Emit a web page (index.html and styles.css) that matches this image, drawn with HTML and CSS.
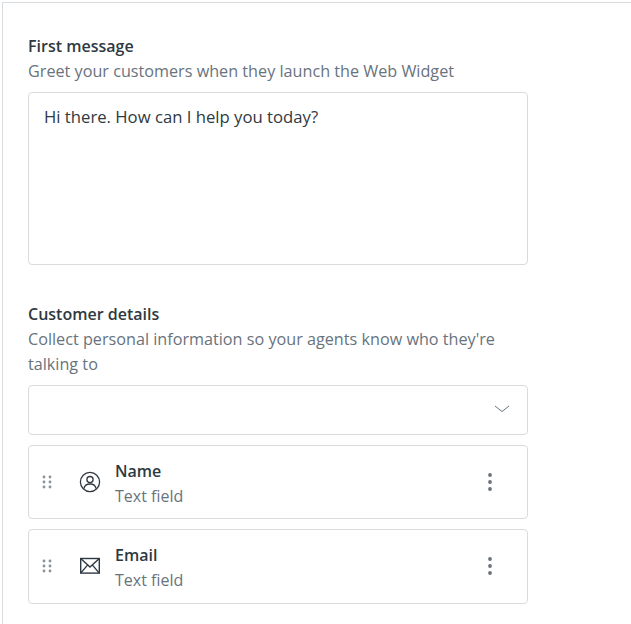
FILE: index.html
```html
<!DOCTYPE html>
<html lang="en">

<head>
    <meta charset="UTF-8">
    <title>Web Widget settings</title>
    <link rel="stylesheet" href="styles.css">
</head>

<body>
    <div class="panel">
        <div class="section first">
            <h2 class="label">First message</h2>
            <p class="hint">Greet your customers when they launch the Web Widget</p>
            <div class="message">Hi there. How can I help you today?</div>
        </div>

        <div class="section details">
            <h2 class="label">Customer details</h2>
            <p class="hint">Collect personal information so your agents know who they're talking to</p>
            <div class="select">
                <svg class="chevron" width="16" height="8" viewBox="0 0 16 8">
                    <path d="M1 1l7 5.500L15 1" fill="none" stroke="#68737d" stroke-width="1"/>
                </svg>
            </div>

            <div class="field">
                <svg class="grip" width="10" height="14" viewBox="0 0 10 14">
                    <g fill="#87929d">
                        <circle cx="2" cy="2" r="1.400"/><circle cx="8" cy="2" r="1.400"/>
                        <circle cx="2" cy="7" r="1.400"/><circle cx="8" cy="7" r="1.400"/>
                        <circle cx="2" cy="12" r="1.400"/><circle cx="8" cy="12" r="1.400"/>
                    </g>
                </svg>
                <svg class="icon" width="22" height="22" viewBox="0 0 22 22">
                    <g fill="none" stroke="#2f3941" stroke-width="1.300">
                        <circle cx="11" cy="11" r="9.600"/>
                        <circle cx="11" cy="8.600" r="3.100"/>
                        <path d="M4.900 17.600c.6-3 3-4.600 6.100-4.600s5.500 1.600 6.100 4.600"/>
                    </g>
                </svg>
                <div class="field-text">
                    <div class="field-name">Name</div>
                    <div class="field-type">Text field</div>
                </div>
                <svg class="more" width="6" height="18" viewBox="0 0 6 18">
                    <g fill="#68737d">
                        <circle cx="3" cy="2" r="1.900"/><circle cx="3" cy="9" r="1.900"/><circle cx="3" cy="16" r="1.900"/>
                    </g>
                </svg>
            </div>

            <div class="field">
                <svg class="grip" width="10" height="14" viewBox="0 0 10 14">
                    <g fill="#87929d">
                        <circle cx="2" cy="2" r="1.400"/><circle cx="8" cy="2" r="1.400"/>
                        <circle cx="2" cy="7" r="1.400"/><circle cx="8" cy="7" r="1.400"/>
                        <circle cx="2" cy="12" r="1.400"/><circle cx="8" cy="12" r="1.400"/>
                    </g>
                </svg>
                <svg class="icon" width="22" height="18" viewBox="0 0 22 18">
                    <g fill="none" stroke="#2f3941" stroke-width="1.400">
                        <rect x="1.700" y="1.500" width="18.600" height="14.600"/>
                        <path d="M1.700 1.500l9.300 8.500 9.300-8.500M1.700 16.100l6.800-8M20.300 16.100l-6.800-8"/>
                    </g>
                </svg>
                <div class="field-text">
                    <div class="field-name">Email</div>
                    <div class="field-type">Text field</div>
                </div>
                <svg class="more" width="6" height="18" viewBox="0 0 6 18">
                    <g fill="#68737d">
                        <circle cx="3" cy="2" r="1.900"/><circle cx="3" cy="9" r="1.900"/><circle cx="3" cy="16" r="1.900"/>
                    </g>
                </svg>
            </div>
        </div>
    </div>
</body>

</html>
```

FILE: styles.css
```css
/* reset */
html,
body {
    height: 100%;
}

body,
h2,
p {
    margin: 0;
    padding: 0;
}

body {
    font-family: 'Open Sans', 'Noto Sans', sans-serif;
    font-size: 16px;
    line-height: 25px;
    background-color: #fff;
    overflow: hidden;
}

/*style*/

.panel {
    margin: 2px 0 0 2px;
    height: calc(100% - 2px);
    box-sizing: border-box;
    border-top: solid 1px #d8dcde;
    border-left: solid 1px #d8dcde;
    padding: 31px 0 0 25px;
}

.section {
    width: 500px;
}

.details {
    margin-top: 37px;
}

.label {
    font-size: 16px;
    font-weight: 600;
    color: #2f3941;
}

.hint {
    font-size: 16.2px;
    color: #68737d;
}

.message {
    margin-top: 8px;
    height: 173px;
    box-sizing: border-box;
    padding: 11px 15px;
    border: solid 1px #d8dcde;
    border-radius: 4px;
    font-size: 16.7px;
    color: #2f3941;
}

.select {
    margin-top: 8px;
    height: 50px;
    box-sizing: border-box;
    padding: 0 17px 2px 0;
    display: flex;
    align-items: center;
    justify-content: flex-end;
    border: solid 1px #d8dcde;
    border-radius: 4px;
}

.field {
    margin-top: 10px;
    height: 74.4px;
    box-sizing: border-box;
    display: flex;
    align-items: center;
    border: solid 1px #d8dcde;
    border-radius: 4px;
}

.grip {
    margin: 0 0 1px 13px;
    flex: none;
}

.icon {
    margin: 0 0 1px 27px;
    flex: none;
}

.field-text {
    margin: 3px 0 0 14px;
    flex: 1;
}

.field-name {
    font-weight: 600;
    color: #2f3941;
}

.field-type {
    color: #68737d;
}

.more {
    margin: 0 34px 1px 0;
    flex: none;
}
```
